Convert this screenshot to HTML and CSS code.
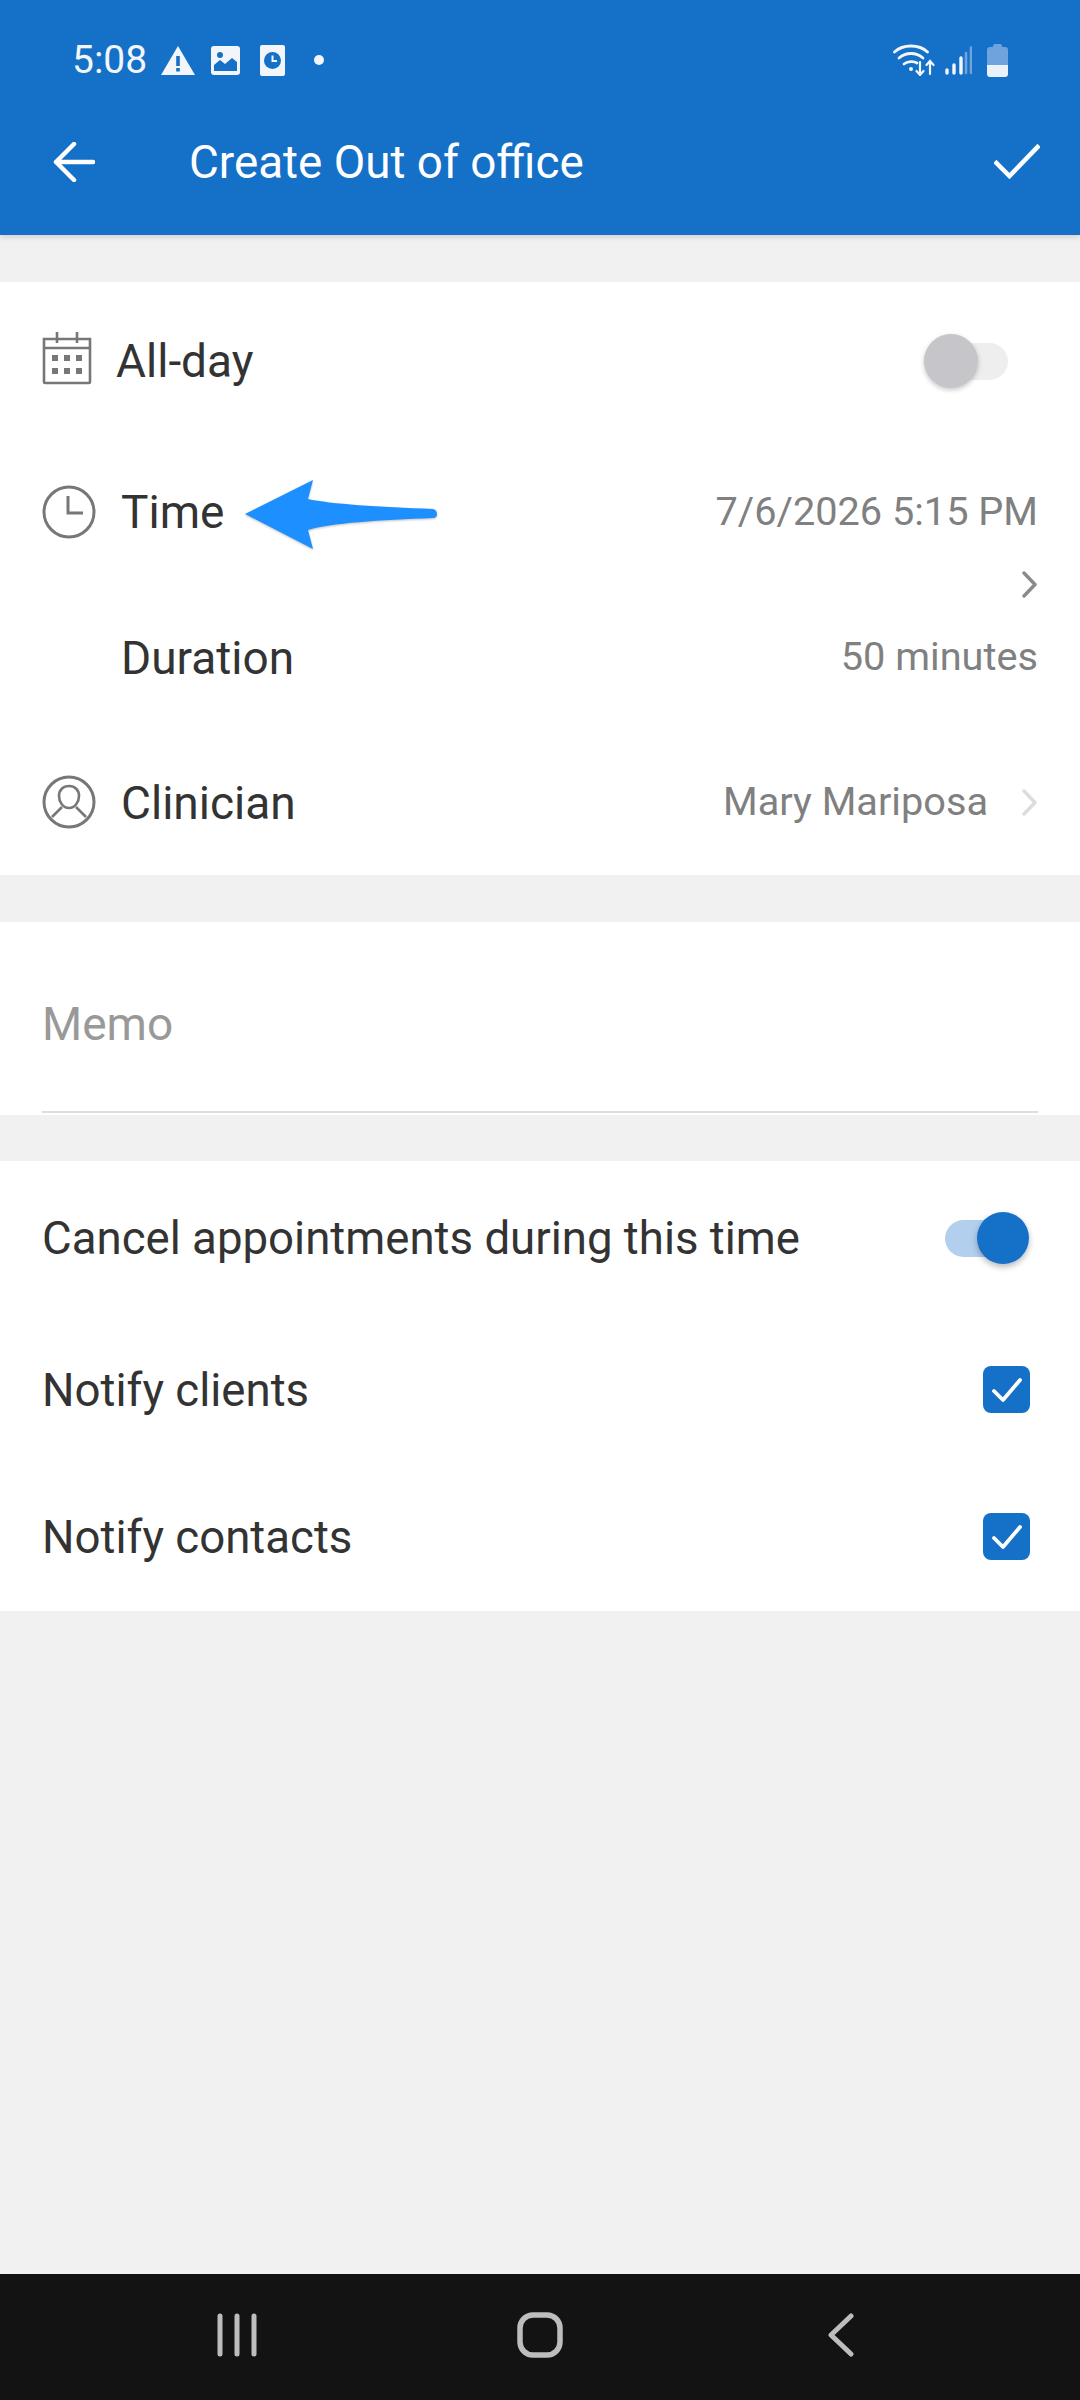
FILE: index.html
```html
<!DOCTYPE html>
<html lang="en">
<head>
<meta charset="utf-8">
<title>Create Out of office</title>
<link rel="stylesheet" href="styles.css">
</head>
<body>
<header class="appbar">
  <div class="status">
    <span class="clock">5:08</span>
    <svg class="st st-warn" viewBox="0 0 34 29"><path fill="#f2f6fb" fill-rule="evenodd" d="M17 0 34 29H0ZM15.2 10v10h3.6V10ZM15.2 22v3.6h3.6V22Z"/></svg>
    <svg class="st st-img" viewBox="0 0 29 29"><rect width="29" height="29" rx="3" fill="#f2f6fb"/><circle cx="9" cy="9" r="3" fill="#1570c7"/><path fill="#1570c7" d="M3 25V19L9 14 14 18 21 12 26 16V25Z"/></svg>
    <svg class="st st-card" viewBox="0 0 25 31"><rect width="25" height="31" rx="2" fill="#f2f6fb"/><circle cx="12.500" cy="15.500" r="8.500" fill="#1570c7"/><path d="M12.500 10.500V16H17" fill="none" stroke="#f2f6fb" stroke-width="2"/></svg>
    <span class="dot"></span>
    <span class="status-gap"></span>
    <svg class="st st-wifi" viewBox="0 0 42 32" fill="none" stroke="#f2f6fb" stroke-linecap="round"><path stroke-width="2.800" d="M1.500 8C10 0 26 0 34.500 8"/><path stroke-width="2.800" d="M6 14C13 8 23 8 30 14"/><path stroke-width="2.800" d="M11 20C15 17 21 17 24 19"/><circle cx="18" cy="25" r="2" fill="#f2f6fb" stroke="none"/><path stroke-width="2.200" d="M27 18V30M23.500 27 27 31 30.500 27M37 30V18M33.500 21 37 17 40.500 21"/></svg>
    <svg class="st st-signal" viewBox="0 0 27 29" stroke-linecap="round" stroke-width="3.400"><path stroke="#f2f6fb" d="M2 27V24M9 27V19M16 27V12"/><path stroke="#6ea3dd" stroke-width="2.600" d="M21 27V7M26 27V1.500"/></svg>
    <svg class="st st-batt" viewBox="0 0 21 33"><path fill="#6ea3dd" d="M6 2Q6 0 8 0H13Q15 0 15 2V3H18Q21 3 21 6V21H0V6Q0 3 3 3H6Z"/><path fill="#eaf1f9" d="M0 21H21V30Q21 33 18 33H3Q0 33 0 30Z"/></svg>
  </div>
  <div class="toolbar">
    <svg class="tb-back" viewBox="0 0 42 40" fill="none" stroke="#fff" stroke-width="4.500" stroke-linecap="round" stroke-linejoin="round"><path d="M40 20H3M21 2 3 20 21 38"/></svg>
    <h1 class="title">Create Out of office</h1>
    <svg class="tb-check" viewBox="0 0 46 36" fill="none" stroke="#fff" stroke-width="4.500" stroke-linecap="square"><path d="M2.500 19 15.500 32 43.500 3"/></svg>
  </div>
</header>

<main class="content">
  <section class="card card-when">
    <div class="row row-allday">
      <svg class="ic ic-cal" viewBox="0 0 50 54" fill="#777"><path fill="none" stroke="#777" stroke-width="2.600" d="M2 8H48V51Q48 52 47 52H3Q2 52 2 51ZM2 17H48M15 1V12M35 1V12"/><rect x="10" y="24" width="6" height="6"/><rect x="22" y="24" width="6" height="6"/><rect x="34" y="24" width="6" height="6"/><rect x="10" y="37" width="6" height="6"/><rect x="22" y="37" width="6" height="6"/><rect x="34" y="37" width="6" height="6"/></svg>
      <span class="label label-allday">All-day</span>
      <span class="switch switch-off"><span class="thumb"></span></span>
    </div>
    <div class="row row-time">
      <svg class="ic" viewBox="0 0 54 54" fill="none" stroke="#777" stroke-width="3"><circle cx="27" cy="27" r="25"/><path d="M26 11V28H41"/></svg>
      <span class="label">Time</span>
      <div class="value-stack">
        <span class="value">7/6/2026 5:15 PM</span>
        <svg class="chev" viewBox="0 0 15 27" fill="none" stroke="#8a8a8a" stroke-width="3.400" stroke-linecap="round" stroke-linejoin="round"><path d="M2 2 13 13.500 2 25"/></svg>
      </div>
    </div>
    <div class="row row-duration">
      <span class="label label-indent">Duration</span>
      <span class="value">50 minutes</span>
    </div>
    <div class="row row-clinician">
      <svg class="ic" viewBox="0 0 54 54" fill="none" stroke="#777" stroke-width="3"><circle cx="27" cy="27" r="25"/><path stroke-width="2.600" d="M27 11C21 11 17 15 17 21 17 27 21 33 27 33 33 33 37 27 37 21 37 15 33 11 27 11Z"/><path stroke-width="2.600" d="M20 32 10 42M34 32 44 42"/></svg>
      <span class="label">Clinician</span>
      <span class="value value-name">Mary Mariposa</span>
      <svg class="chev chev-light" viewBox="0 0 15 27" fill="none" stroke="#dcdcdc" stroke-width="3.400" stroke-linecap="round" stroke-linejoin="round"><path d="M2 2 13 13.500 2 25"/></svg>
    </div>
  </section>

  <section class="card card-memo">
    <div class="memo">Memo</div>
  </section>

  <section class="card card-options">
    <div class="row row-cancel">
      <span class="label">Cancel appointments during this time</span>
      <span class="switch switch-on"><span class="thumb"></span></span>
    </div>
    <div class="row row-notify">
      <span class="label">Notify clients</span>
      <span class="checkbox"><svg viewBox="0 0 47 47" fill="none" stroke="#fff" stroke-width="3.800" stroke-linecap="round" stroke-linejoin="round"><path d="M11 25 20 34 37 14"/></svg></span>
    </div>
    <div class="row row-notify">
      <span class="label">Notify contacts</span>
      <span class="checkbox"><svg viewBox="0 0 47 47" fill="none" stroke="#fff" stroke-width="3.800" stroke-linecap="round" stroke-linejoin="round"><path d="M11 25 20 34 37 14"/></svg></span>
    </div>
  </section>
</main>

<nav class="navbar">
  <svg class="nav-ic nav-recent" viewBox="0 0 40 44" stroke="#bdbdbd" stroke-width="5" stroke-linecap="round"><path d="M3 3V41M20 3V41M37 3V41"/></svg>
  <svg class="nav-ic nav-home" viewBox="0 0 46 46" fill="none" stroke="#bdbdbd" stroke-width="5.500"><rect x="3" y="3" width="40" height="40" rx="13"/></svg>
  <svg class="nav-ic nav-back" viewBox="0 0 26 44" fill="none" stroke="#bdbdbd" stroke-width="5" stroke-linecap="round" stroke-linejoin="round"><path d="M23 3 3 22 23 41"/></svg>
</nav>

<svg class="annotation-arrow" viewBox="0 0 194 72"><path fill="#1e8fff" d="M0 35 68 1 63 20C85 25 135 28 188 30Q192 31 192 35 192 39 188 39C135 41 85 44 63 51L68 70Z"/></svg>
</body>
</html>
```

FILE: styles.css
```css
* { box-sizing: border-box; }
html, body { margin: 0; padding: 0; }
body {
  position: relative;
  width: 1080px;
  height: 2400px;
  display: flex;
  flex-direction: column;
  background: #f1f1f1;
  font-family: Roboto, "Noto Sans", sans-serif;
  color: #333;
  overflow: hidden;
}
svg { display: block; flex: none; }

.appbar {
  height: 235px;
  flex: none;
  background: #1570c7;
  color: #fff;
  box-shadow: 0 2px 6px rgba(0, 0, 0, .14);
  position: relative;
}
.status {
  height: 120px;
  padding-left: 72px;
  padding-right: 72px;
  display: flex;
  align-items: center;
}
.clock { font-size: 39px; width: 89px; color: #f2f6fb; }
.st-warn { width: 34px; height: 29px; margin-right: 16px; }
.st-img { width: 29px; height: 29px; margin-right: 20px; }
.st-card { width: 25px; height: 31px; margin-right: 29px; }
.dot { width: 10px; height: 10px; border-radius: 50%; background: #f2f6fb; }
.status-gap { flex: 1; }
.st-wifi { width: 42px; height: 32px; margin-right: 10px; }
.st-signal { width: 27px; height: 29px; margin-right: 15px; }
.st-batt { width: 21px; height: 33px; }

.toolbar {
  height: 84px;
  padding-left: 53px;
  padding-right: 40px;
  display: flex;
  align-items: center;
}
.tb-back { width: 42px; height: 40px; margin-right: 94px; }
.title { flex: 1; margin: 2px 0 0; font-size: 45.8px; font-weight: 400; line-height: 84px; }
.tb-check { width: 46px; height: 36px; }

.content { flex: 1; padding-top: 46px; display: flex; flex-direction: column; }
.card { background: #fff; flex: none; }
.card-when { height: 593px; margin-top: 1px; margin-bottom: 47px; }
.card-memo { height: 193px; margin-bottom: 46px; padding: 0 42px; }
.card-options { height: 450px; }

.row { display: flex; align-items: center; padding: 0 42px; }
.row-allday { height: 158px; }
.row-time { height: 174px; align-items: flex-start; padding-top: 46px; }
.row-duration { height: 88px; }
.row-clinician { height: 173px; padding-top: 28px; }
.row-cancel { height: 156px; }
.row-notify { height: 147px; }

.ic { width: 54px; height: 54px; position: relative; top: -1px; }
.ic-cal { width: 50px; height: 54px; top: -3px; }
.label { font-size: 46px; line-height: 54px; margin-left: 25px; margin-right: auto; }
.label-allday { margin-left: 24px; }
.label-indent { margin-left: 79px; }
.row-cancel .label, .row-notify .label { margin-left: 0; font-size: 45.6px; }
.row-time .label { margin-top: -1px; }

.value { font-size: 39.7px; line-height: 54px; color: #808080; position: relative; top: -1px; }
.value-stack { display: flex; flex-direction: column; align-items: flex-end; }
.chev { width: 15px; height: 27px; position: relative; left: -1px; }
.value-stack .chev { margin-top: 31px; }
.value-name { margin-right: 35px; }

.memo {
  height: 191px;
  padding-top: 75px;
  font-size: 46px;
  line-height: 54px;
  color: #999;
  border-bottom: 2px solid #dedede;
}

.switch { position: relative; display: block; height: 37px; border-radius: 19px; }
.thumb { position: absolute; top: 50%; border-radius: 50%; transform: translateY(-50%); }
.switch-off { width: 84px; background: #eeeeef; margin-right: 30px; }
.switch-off .thumb { left: 0; width: 54px; height: 54px; background: #c6c6ca; box-shadow: 0 2px 5px rgba(0, 0, 0, .22); }
.switch-on { width: 82px; background: #b3cfee; margin-right: 11px; margin-top: -2px; }
.switch-on .thumb { right: -2px; width: 52px; height: 52px; background: #1570c7; box-shadow: 0 3px 6px rgba(0, 0, 0, .28); }

.checkbox {
  width: 47px;
  height: 47px;
  margin-right: 8px;
  margin-top: -2px;
  border-radius: 8px;
  background: #1570c7;
}
.checkbox svg { width: 47px; height: 47px; }

.navbar {
  height: 126px;
  flex: none;
  background: #131313;
  position: relative;
  display: flex;
  align-items: center;
  padding: 0 226px 5px 217px;
  justify-content: space-between;
}
.nav-recent { width: 40px; height: 44px; }
.nav-home { width: 46px; height: 46px; position: relative; left: -3px; }
.nav-back { width: 26px; height: 44px; }

.annotation-arrow {
  position: absolute;
  left: 245px;
  top: 479px;
  width: 194px;
  height: 72px;
  filter: drop-shadow(0 1px 1px rgba(0, 0, 0, .25));
}
```
